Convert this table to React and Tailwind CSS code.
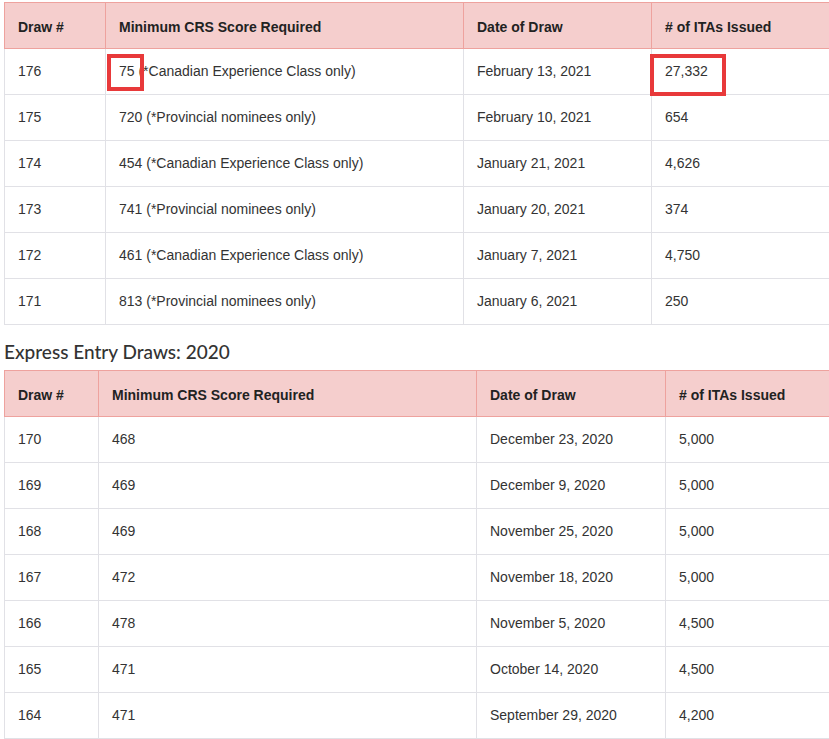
import React from 'react';

// rows for the two draw tables
const draws2021 = [
  ['176', '75 (*Canadian Experience Class only)', 'February 13, 2021', '27,332'],
  ['175', '720 (*Provincial nominees only)', 'February 10, 2021', '654'],
  ['174', '454 (*Canadian Experience Class only)', 'January 21, 2021', '4,626'],
  ['173', '741 (*Provincial nominees only)', 'January 20, 2021', '374'],
  ['172', '461 (*Canadian Experience Class only)', 'January 7, 2021', '4,750'],
  ['171', '813 (*Provincial nominees only)', 'January 6, 2021', '250'],
];

const draws2020 = [
  ['170', '468', 'December 23, 2020', '5,000'],
  ['169', '469', 'December 9, 2020', '5,000'],
  ['168', '469', 'November 25, 2020', '5,000'],
  ['167', '472', 'November 18, 2020', '5,000'],
  ['166', '478', 'November 5, 2020', '4,500'],
  ['165', '471', 'October 14, 2020', '4,500'],
  ['164', '471', 'September 29, 2020', '4,200'],
];

const headers = ['Draw #', 'Minimum CRS Score Required', 'Date of Draw', '# of ITAs Issued'];

const DrawTable = ({ rows, widths }) => (
  <table className="w-[825px] border-collapse table-fixed text-[14px] text-[#333]">
    <colgroup>
      {widths.map((w, i) => <col key={i} style={{ width: w }} />)}
    </colgroup>
    <thead>
      <tr className="bg-[#f5cecd]">
        {headers.map((h, i) => (
          <th key={i} className="h-[46px] border border-[#eea29e] px-[13px] pt-[4px] text-left font-bold text-[#222]">{h}</th>
        ))}
      </tr>
    </thead>
    <tbody>
      {rows.map((row, r) => (
        <tr key={r}>
          {row.map((cell, c) => (
            <td key={c} className="h-[46px] border border-[#e1e1e6] px-[13px]">{cell}</td>
          ))}
        </tr>
      ))}
    </tbody>
  </table>
);

export default function App() {
  return (
    <div className="relative bg-white w-[829px] h-[739px] overflow-hidden pl-[4px] pt-[2px]" style={{ fontFamily: '"Liberation Sans", Arial, sans-serif' }}>
      <DrawTable rows={draws2021} widths={[101, 358, 188, 178]} />
      <h3 className="mt-[14px] mb-[6px] text-[19px] font-medium text-[#333] leading-[25px]" style={{ fontFamily: 'Lato, "Open Sans", sans-serif' }}>
        Express Entry Draws: 2020
      </h3>
      <DrawTable rows={draws2020} widths={[94, 378, 189, 164]} />

      {/* red highlight boxes */}
      <div className="absolute left-[107px] top-[54px] w-[37px] h-[37px] border-4 border-[#e8393a]"></div>
      <div className="absolute left-[650px] top-[54px] w-[76px] h-[42px] border-4 border-[#e8393a]"></div>
    </div>
  );
}
